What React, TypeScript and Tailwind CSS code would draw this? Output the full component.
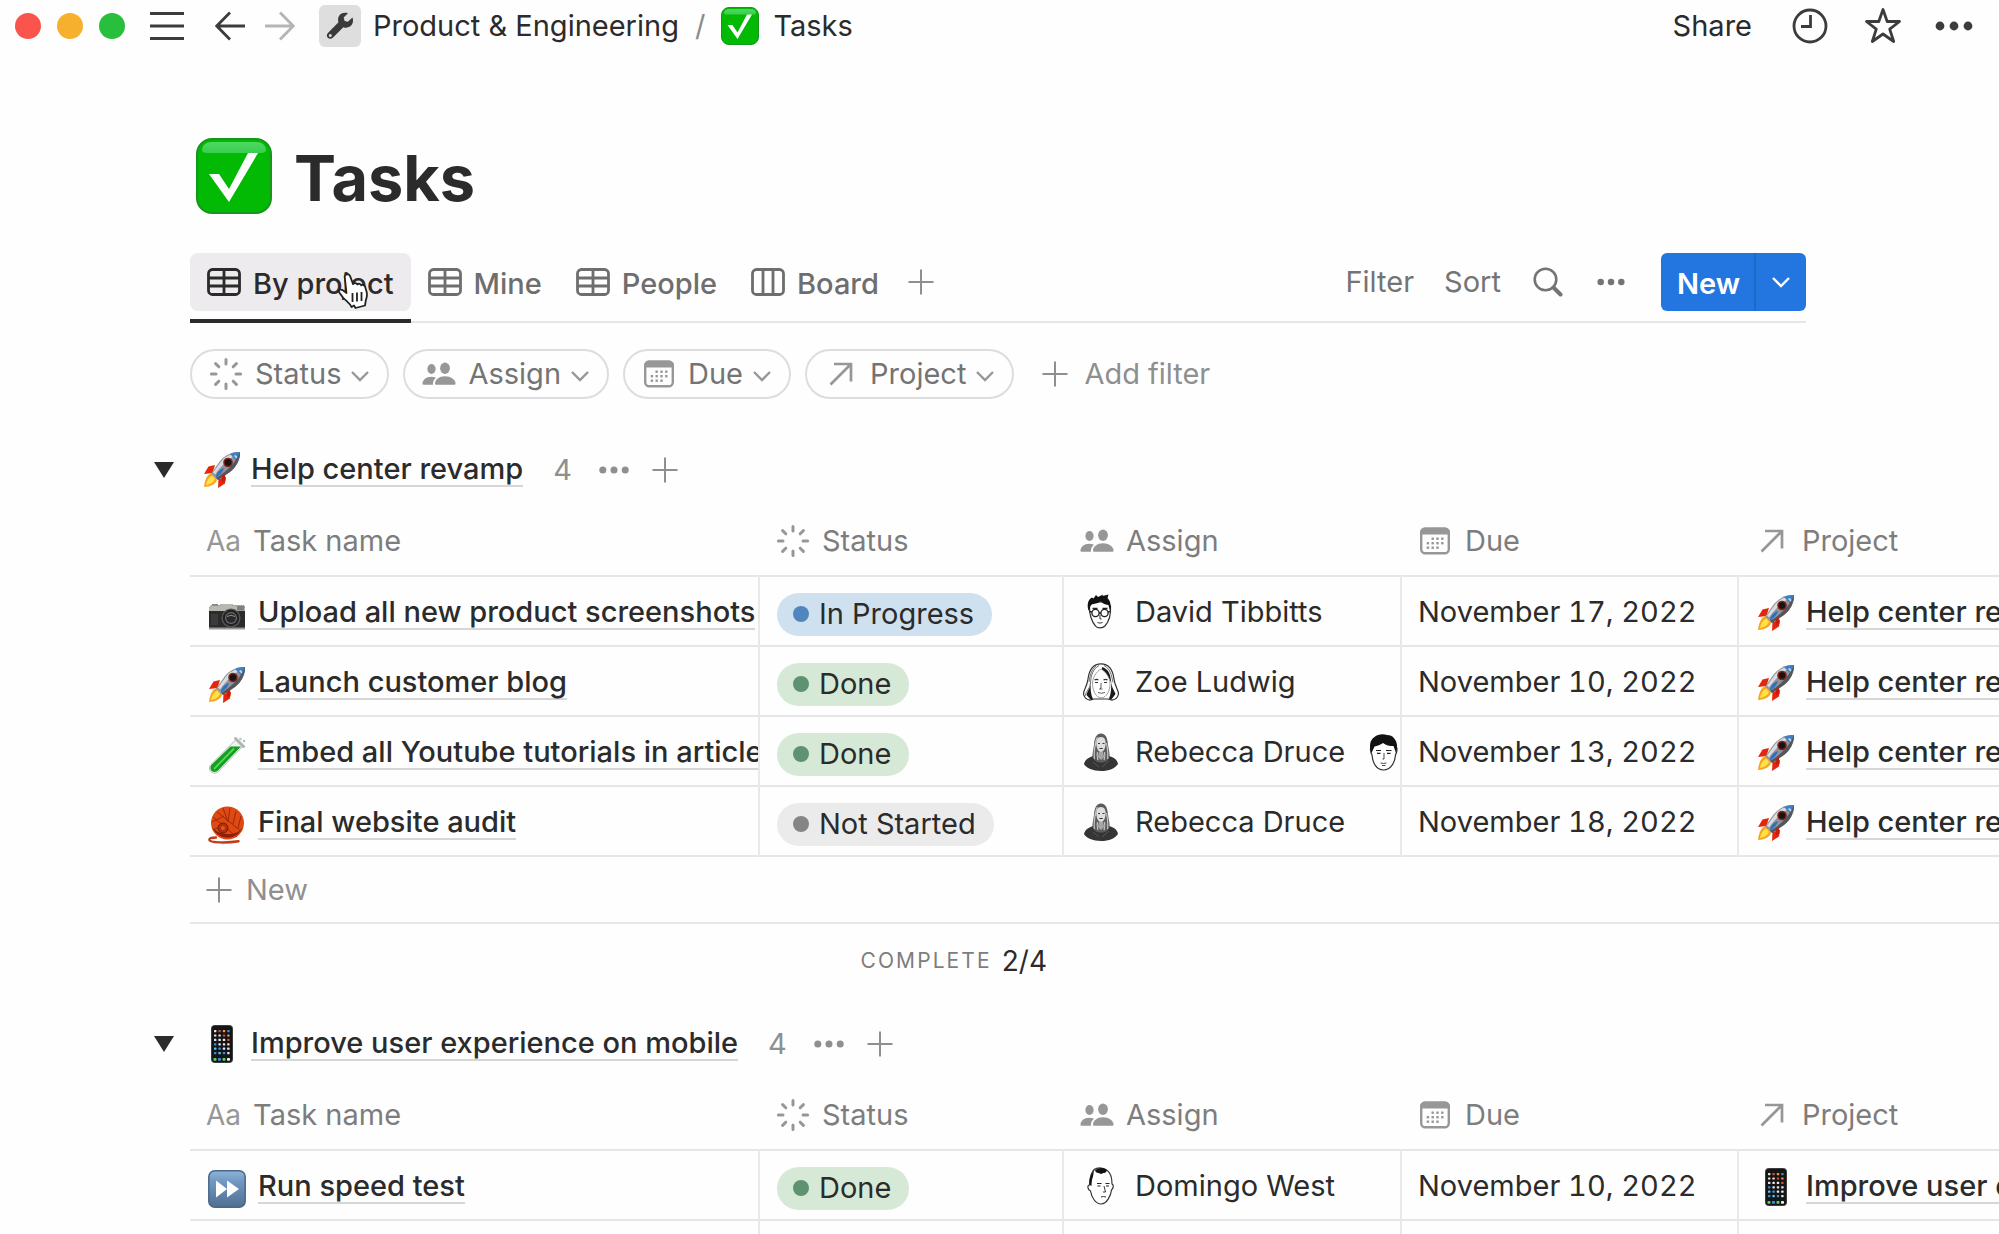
import React from "react";
import clsx from "clsx";

type IconProps = { className?: string };

/* ---------- line icons ---------- */

const PlusIcon = ({ className }: IconProps) => (
  <svg viewBox="0 0 26 26" className={clsx("shrink-0", className)} fill="none" stroke="currentColor" strokeWidth="2">
    <path d="M13 0.5v25M0.5 13h25" />
  </svg>
);

const DotsIcon = ({ className }: IconProps) => (
  <svg viewBox="0 0 38 10" className={clsx("shrink-0", className)} fill="currentColor">
    <circle cx="5" cy="5" r="4.4" />
    <circle cx="19" cy="5" r="4.4" />
    <circle cx="33" cy="5" r="4.4" />
  </svg>
);

const ChevronIcon = ({ className }: IconProps) => (
  <svg viewBox="0 0 18 11" className={clsx("shrink-0", className)} fill="none" stroke="currentColor" strokeWidth="2.4">
    <path d="M1 1l8 8 8-8" />
  </svg>
);

const TableIcon = ({ className }: IconProps) => (
  <svg viewBox="0 0 34 28" className={clsx("h-7 w-[34px] shrink-0", className)} fill="none" stroke="currentColor" strokeWidth="2.8">
    <rect x="1.5" y="1.5" width="31" height="25" rx="4" />
    <path d="M17 2v24M2 10h30M2 18h30" />
  </svg>
);

const BoardIcon = ({ className }: IconProps) => (
  <svg viewBox="0 0 34 28" className={clsx("h-7 w-[34px] shrink-0", className)} fill="none" stroke="currentColor" strokeWidth="2.8">
    <rect x="1.5" y="1.5" width="31" height="25" rx="4" />
    <path d="M12 2v24M22 2v24" />
  </svg>
);

const StatusIcon = ({ className }: IconProps) => (
  <svg viewBox="0 0 34 34" className={clsx("size-[34px] shrink-0", className)} fill="none" stroke="currentColor" strokeWidth="3" strokeLinecap="round">
    <path d="M17 2.400v4.600M17 27v4.600M2.400 17h4.600M27 17h4.600M6.600 6.600l3.200 3.200M24.200 24.200l3.200 3.200M6.600 27.400l3.200-3.200M24.200 9.800l3.200-3.200" />
  </svg>
);

const PeopleIcon = ({ className }: IconProps) => (
  <svg viewBox="0 0 34 24" className={clsx("h-6 w-[34px] shrink-0", className)} fill="currentColor">
    <ellipse cx="23" cy="6.200" rx="4.900" ry="5.700" />
    <ellipse cx="9.500" cy="7" rx="4.100" ry="4.900" />
    <path d="M13 21.500c0-4 4.300-7.300 10-7.300s10.500 3.300 10.500 7.300c0 .9-.5 1.300-1.300 1.300H14.300c-.8 0-1.300-.4-1.300-1.300z" />
    <path d="M11 22.800H1.600c-.7 0-1.100-.4-1.100-1.200 0-3.600 3.600-6.900 8.800-6.900 1.800 0 3.400.4 4.700 1-2.300 1.700-3.500 4.500-3 7.100z" />
  </svg>
);

const CalendarIcon = ({ className }: IconProps) => (
  <svg viewBox="0 0 32 28" className={clsx("h-7 w-8 shrink-0", className)}>
    <rect x="2.200" y="1.700" width="27.600" height="24.600" rx="4" fill="none" stroke="currentColor" strokeWidth="2.400" />
    <path d="M1 7.600V5.500a5 5 0 0 1 5-5h20a5 5 0 0 1 5 5v2.100z" fill="currentColor" />
    <g fill="currentColor">
      <rect x="12.500" y="10.500" width="2.400" height="2.400" />
      <rect x="17.300" y="10.500" width="2.400" height="2.400" />
      <rect x="22.100" y="10.500" width="2.400" height="2.400" />
      <rect x="7.700" y="15" width="2.400" height="2.400" />
      <rect x="12.500" y="15" width="2.400" height="2.400" />
      <rect x="17.300" y="15" width="2.400" height="2.400" />
      <rect x="22.100" y="15" width="2.400" height="2.400" />
      <rect x="7.700" y="19.500" width="2.400" height="2.400" />
      <rect x="12.500" y="19.500" width="2.400" height="2.400" />
      <rect x="17.300" y="19.500" width="2.400" height="2.400" />
    </g>
  </svg>
);

const RelationIcon = ({ className }: IconProps) => (
  <svg viewBox="0 0 24 24" className={clsx("size-6 shrink-0", className)} fill="none" stroke="currentColor" strokeWidth="2.700">
    <path d="M1.500 22.500L21.500 2.500M5 2h17v17.500" />
  </svg>
);

/* ---------- emoji ---------- */

const CheckEmoji = ({ className }: IconProps) => (
  <svg viewBox="0 0 76 76" className={clsx("shrink-0", className)}>
    <defs>
      <linearGradient id="gloss" x1="0" y1="0" x2="0" y2="1">
        <stop offset="0" stopColor="#4fd864" />
        <stop offset="1" stopColor="#3ace4c" />
      </linearGradient>
    </defs>
    <rect x="1" y="1" width="74" height="74" rx="15" fill="#02b903" stroke="#17961e" strokeWidth="2" />
    <path d="M6 13C6 7 10 4 16 4h44c6 0 10 3 10 9-2 2-4 2-6 2H12c-2 0-4 0-6-2z" fill="url(#gloss)" />
    <path d="M13 36h10l10 15 19-36h10L33 64z" fill="#fff" />
  </svg>
);

const RocketEmoji = ({ className }: IconProps) => (
  <svg viewBox="0 0 38 38" className={clsx("size-[38px] shrink-0", className)}>
    <path d="M12 14L5.500 15.500 1 23l8.500-1z" fill="#e5260c" />
    <path d="M23 26l-1 6.500-7 4.500.5-9z" fill="#e5260c" />
    <path d="M9 22c-4 1-7 5-8 14 6 0 12-3 13-7z" fill="#f7a51c" />
    <path d="M9.500 24.500C6 26 3.500 30 3 34c4-.5 8-3 9-6z" fill="#ffe04a" />
    <path d="M37 1c-8-.5-15 3-20 9L8 22.500l7 6.500 12-8c6.500-5 10-12 10-20z" fill="#8f949b" />
    <path d="M36 2c-7 0-13.500 3-18 8.500L10 21.500l2 2C18 15 26 7 36 2z" fill="#d8dce1" />
    <path d="M37 1c-3.500 0-7 .6-10 2l7.500 8C36.500 8 37 4.500 37 1z" fill="#3f7fc4" />
    <path d="M36.500 10.500L31 5l1.500-1 4 4z" fill="#c9d8e8" />
    <path d="M37 1c0 8-3.500 15-10 20l-12 8-2-2c10-6 19-14 24-26z" fill="#53565c" />
    <circle cx="25" cy="11.500" r="4.800" fill="#8d2017" />
    <circle cx="25" cy="11.500" r="3.300" fill="#151515" />
    <path d="M21 17c-4 1-7.500 4.500-8.500 10 3.500-2.500 7-5 8.500-10z" fill="#2f6fc0" />
    <path d="M22 23l-3.500 2.500.5 6 3.500-2z" fill="#c51c0b" />
  </svg>
);

const CameraEmoji = ({ className }: IconProps) => (
  <svg viewBox="0 0 38 38" className={clsx("size-[38px] shrink-0", className)}>
    <path d="M1 12l2-2.500h9l1-1.500h11l1 1.500h11L37 12v21H1z" fill="#2b2b2b" />
    <path d="M1 15v-3l2-2.500h9l1-1.500h11l1 1.500h10.500L37 12v3z" fill="#b9b7b2" />
    <rect x="29" y="10" width="7" height="4.500" fill="#80817f" />
    <rect x="4" y="8" width="6" height="2" fill="#8d8b87" />
    <rect x="1" y="31.500" width="36" height="2" fill="#9b9a97" />
    <circle cx="23" cy="22" r="9.600" fill="#55565a" />
    <circle cx="23" cy="22" r="8.200" fill="#222" />
    <circle cx="23" cy="22" r="6" fill="#6b6d70" />
    <circle cx="23" cy="22" r="4.800" fill="#29292b" />
    <path d="M19 20.500q4-2.500 8 0" stroke="#8d8f92" fill="none" />
    <rect x="3" y="18" width="7" height="11" fill="#3b3b3b" />
  </svg>
);

const TestTubeEmoji = ({ className }: IconProps) => (
  <svg viewBox="0 0 38 38" className={clsx("size-[38px] shrink-0", className)}>
    <path d="M28 3.500L35 10 10.500 35.500c-2.400 2.200-5.600 2.200-7.600.2s-2-5 .2-7.300z" fill="#eef3f1" stroke="#b5bbb8" />
    <path d="M22.500 10.500h10.500L10 34.500c-2 1.900-4.800 1.900-6.500.2s-1.400-4.300.4-6.200z" fill="#11a01e" />
    <path d="M26 12.500L6 33" stroke="#58d35c" strokeWidth="1.800" />
    <path d="M27.500 2.500l8 8" stroke="#b0b5b3" strokeWidth="3" strokeLinecap="round" />
    <circle cx="32.500" cy="3" r="1.500" fill="#c8ccca" />
    <circle cx="36" cy="5" r="1.200" fill="#b5bab8" />
  </svg>
);

const YarnEmoji = ({ className }: IconProps) => (
  <svg viewBox="0 0 38 38" className={clsx("size-[38px] shrink-0", className)}>
    <path d="M8 31.500c-5 0-7 .6-6.500 2.600.8 2.500 16 3.200 29 1.200" fill="none" stroke="#c23a1c" strokeWidth="2.400" strokeLinecap="round" />
    <circle cx="19.500" cy="17" r="16.500" fill="#de4a12" />
    <path d="M4 21a16.500 16.500 0 0 0 31 0c-4 6-9 7-15 7S8 26 4 21z" fill="#8e1f0a" />
    <g fill="none" stroke="#9c2a0d" strokeWidth="1">
      <path d="M5 11l24 20M9 6l24 19M15 2l5 14M22 2l-2 14M28 5l-3 13M33 10l-3 12M4 16l12-6M5 24l12-6" />
    </g>
    <circle cx="15" cy="22" r="5" fill="#b0300d" stroke="#7d1b08" />
    <circle cx="15" cy="22" r="2" fill="#df5a28" />
  </svg>
);

const PHONE_APPS = ["#e8e8e8", "#3f8fe0", "#e8e8e8", "#d94a3c", "#5ac8fa", "#e8e8e8", "#f0a030", "#3f8fe0"];

const PhoneEmoji = ({ className }: IconProps) => (
  <svg viewBox="0 0 38 38" className={clsx("size-[38px] shrink-0", className)}>
    <rect x="8.500" y="0.500" width="21" height="37" rx="3" fill="#151515" stroke="#3c3c3c" />
    {Array.from({ length: 24 }, (_, i) => (
      <rect
        key={i}
        x={11 + (i % 4) * 4.4}
        y={5 + Math.floor(i / 4) * 4.4}
        width="2.400"
        height="2.200"
        rx="0.600"
        fill={PHONE_APPS[(i * 3 + Math.floor(i / 4)) % PHONE_APPS.length]}
      />
    ))}
    <rect x="10.500" y="33" width="3" height="2.800" rx="0.700" fill="#4cd964" />
    <rect x="15" y="33" width="3" height="2.800" rx="0.700" fill="#3f8fe0" />
    <rect x="19.500" y="33" width="3" height="2.800" rx="0.700" fill="#4cd964" />
    <rect x="24" y="33" width="3" height="2.800" rx="0.700" fill="#f2f2f2" />
  </svg>
);

const FastForwardEmoji = ({ className }: IconProps) => (
  <svg viewBox="0 0 38 38" className={clsx("size-[38px] shrink-0", className)}>
    <defs>
      <linearGradient id="ff" x1="0" y1="0" x2="0" y2="1">
        <stop offset="0" stopColor="#8fb4d8" />
        <stop offset="0.300" stopColor="#6f98c2" />
        <stop offset="1" stopColor="#4f6f90" />
      </linearGradient>
    </defs>
    <rect x="0.800" y="0.800" width="36.400" height="36.400" rx="6" fill="url(#ff)" stroke="#48688a" strokeWidth="1.500" />
    <path d="M8 10.500v17L19 19zM19 10.500v17L31 19z" fill="#fff" />
  </svg>
);

/* ---------- avatars ---------- */

const DavidAvatar = () => (
  <svg viewBox="0 0 38 38" className="size-[38px] shrink-0">
    <path d="M7.500 13c-.6 8 2.500 16 6 20 2 2.600 7 2.600 9.500 0 3.500-4 6-12 5.500-20L24 9H11z" fill="#fff" stroke="#333" strokeWidth="1.200" />
    <path d="M6.500 18C5 12 5.500 7 10 4.500l1.500 1L14 2l2 2 5-2.500-.5 1.500 6-1.500-1 3.500c3 3 4 8 2.500 13L26.500 12c-4-.5-6-2-8-3.500-3 2-6 2.500-9.500 3z" fill="#111" />
    <g fill="none" stroke="#222" strokeWidth="1.300">
      <circle cx="13.500" cy="20" r="3.600" />
      <circle cx="22.500" cy="20" r="3.600" />
      <path d="M17 20h2M7.500 18.500l2.500.5M26 19l2-.5M10.500 15.500h5M20.500 15.500h5" />
      <path d="M18 22v4h1.500M15.500 29.500q2.500 1.200 5 0" strokeWidth="0.900" />
    </g>
  </svg>
);

const ZoeAvatar = () => (
  <svg viewBox="0 0 38 38" className="size-[38px] shrink-0">
    <path d="M19 0.800C10 .8 7 8 6 16 5 24 1.500 27 1.500 31c.5 3 3 5.500 6.500 6.200l4-1.200h14l4 1.200c3.500-.7 6-3.200 6.500-6.200 0-4-3.500-7-4.500-15C31 8 28 .8 19 .8z" fill="#fff" stroke="#333" strokeWidth="1.200" />
    <path d="M29 19c1 6 3 8 4.500 12L29 37l-2-1.500c2-4.500 2.500-10 2-16.500z" fill="#1a1a1a" />
    <path d="M9 20c-.5 5-3.500 7.500-4.500 12L9 37l2-1c-2-4-3-10-2-16z" fill="#1a1a1a" />
    <path d="M20 4c6 2 8.500 6 9.300 16-2.300-5-4.300-10-9.300-13z" fill="#1a1a1a" />
    <path d="M19 6c-5 3-8 8-8.500 14 0 6 2 11 5 13.500 2 1.800 5.500 1.800 7.500 0 3-2.500 5.500-8.500 5-13.500C27.500 14 24 9 19 6z" fill="#fff" stroke="#777" strokeWidth="0.700" />
    <g fill="none" stroke="#333" strokeWidth="1.100">
      <path d="M17 2.500C11 6 9 12 8.500 20 8 26 4 28 3 33M14 3C9 7 8 13 7 19M22 2.500c6 3 7.500 9 9 17" strokeWidth="0.700" />
      <path d="M12.500 17q2-1.300 4 0M21.500 17q2-1.300 4 0M13 19.500h3M22 19.500h3" />
      <path d="M19 20v5l-1.500 1h3M16 29.500q3.500 1.500 7 0" strokeWidth="0.800" />
    </g>
  </svg>
);

const RebeccaAvatar = () => (
  <svg viewBox="0 0 38 38" className="size-[38px] shrink-0">
    <path d="M2 31c1-5 6-7 9-8h16c4 1 8 3 9 8-3 4.500-9 7-17 7S4 35 2 31z" fill="#353535" />
    <path d="M19 0.500c-5 0-6.500 5-7 11-.4 5-2 9-1.500 13 2 4 5 5 8.500 5s7-1 8.500-5c.5-5-1-8-1.500-13-.5-6-2-11-7-11z" fill="#5c5c5c" />
    <path d="M13.500 10c-1 6-2 11-1 16M24.500 10c1 6 2 11 1 16M15.500 4c-2 3-2 6-2 9M15.500 19c-1 4 0 6 .5 8M22.500 19c1 4 0 6-.5 8" stroke="#c4c4c4" strokeWidth="1.200" fill="none" />
    <path d="M19 4c-3.500 0-5 3-4.600 7.500.2 4 2.200 7.500 4.600 7.500s4.400-3.500 4.600-7.500C24 7 22.500 4 19 4z" fill="#dedede" />
    <path d="M16 10.500h2M20.500 10.500h2M17.500 15.500h3.200" stroke="#333" strokeWidth="1.100" />
    <path d="M17 19h4l1.200 5-3.200 3-3.200-3z" fill="#a5a5a5" />
    <path d="M11 29l6 5M27 28l-7 6" stroke="#565656" />
  </svg>
);

const DarkHairAvatar = () => (
  <svg viewBox="0 0 38 38" className="size-[38px] shrink-0">
    <path d="M7 14c-2.500 0-1.500 5 0 8 .5 7 4 15 11.500 15S30 29 30.500 22c1.500-3 2.500-8 0-8L27 8H10z" fill="#fff" stroke="#333" strokeWidth="1.200" />
    <path d="M6.500 20C4 14 4.500 7 9.500 4c3-3 9-3.500 12.500-2 6 0 9.500 5 10 10 .3 3-.5 6-1 8L28.500 13c-4 0-7.500-.5-10.500-3-2.500 2-6 3-8.500 3.500z" fill="#111" />
    <g fill="none" stroke="#222" strokeWidth="1.200">
      <path d="M11 17.500h5M21 17.500h5.500M12 20.300h3.500M22 20.300h3.500" />
      <path d="M19 20v6h-1.500M15.500 30q3 1 6 0M17 32.500h3.500" strokeWidth="0.800" />
    </g>
  </svg>
);

const DomingoAvatar = () => (
  <svg viewBox="0 0 38 38" className="size-[38px] shrink-0">
    <path d="M9 8c-1 3-1.500 7-1.500 10C5 18 5.500 23 8.500 24c1 6 5 13 10.500 13 6 0 10-9 10.500-14 2-2 2.500-5 .5-6 0-8-2-15-11-16C14 .5 10.500 3 9 8z" fill="#fff" stroke="#333" strokeWidth="1.200" />
    <path d="M12 3.500C9 7 7 12 8 18l1.500 1c0-4 .5-7 1.500-9.500z" fill="#111" />
    <path d="M13 3.500c3-3.500 10-3.500 12 0-1 2-2 2.500-3.500 2.500l-2.500 1-2.500-1c-2 0-3-1-3.500-2.500z" fill="#111" />
    <g fill="none" stroke="#222" strokeWidth="1.200">
      <path d="M15 16.500h4.500M23.500 16.500h4M15.500 19h3M24 19h3" />
      <path d="M22 19l1.500 6H21M19 30q2.500-1 5 0" strokeWidth="0.900" />
    </g>
  </svg>
);

const HandCursor = ({ className }: IconProps) => (
  <svg viewBox="0 0 32 40" className={className}>
    <path
      d="M9.500 3.500c1.500-.6 3 .2 3.600 1.700l3 8c.8-1.500 3.500-1.500 4.200.3 1-1.200 3.300-1 4 .8 1.300-.9 3.300-.1 3.900 1.600l1.600 5.600c.7 3-.3 5.500-1 8l-.8 5-9.500 2.500-1.500-2.500-2.500 1.500c-1.500-4-5.500-6-8.500-9.500-1.500-2-4-4.500-4.300-6.500.5-1.800 3-1.500 4.500-.5l3.300 2.500L7.800 6.700c-.5-1.500.3-2.700 1.700-3.200z"
      fill="#fff"
      stroke="#222"
      strokeWidth="1.800"
      strokeLinejoin="round"
    />
    <path d="M15.500 22v9M20 21.500v9M24.500 21v9" stroke="#222" strokeWidth="1.800" />
  </svg>
);

/* ---------- data ---------- */

const statusStyles = {
  "In Progress": { pill: "bg-[#cfe1ef]", dot: "bg-[#4f86bd]" },
  Done: { pill: "bg-[#d6e9d6]", dot: "bg-[#5f9271]" },
  "Not Started": { pill: "bg-[#ecebec]", dot: "bg-[#858585]" },
};

type Person = { name: string; Avatar: React.ComponentType };

type Task = {
  Emoji: React.ComponentType<IconProps>;
  name: string;
  status: keyof typeof statusStyles;
  assign: Person[];
  due: string;
};

type Group = {
  title: string;
  Emoji: React.ComponentType<IconProps>;
  count: number;
  complete?: string;
  tasks: Task[];
};

const david = { name: "David Tibbitts", Avatar: DavidAvatar };
const zoe = { name: "Zoe Ludwig", Avatar: ZoeAvatar };
const rebecca = { name: "Rebecca Druce", Avatar: RebeccaAvatar };
const domingo = { name: "Domingo West", Avatar: DomingoAvatar };

const groups: Group[] = [
  {
    title: "Help center revamp",
    Emoji: RocketEmoji,
    count: 4,
    complete: "2/4",
    tasks: [
      { Emoji: CameraEmoji, name: "Upload all new product screenshots", status: "In Progress", assign: [david], due: "November 17, 2022" },
      { Emoji: RocketEmoji, name: "Launch customer blog", status: "Done", assign: [zoe], due: "November 10, 2022" },
      { Emoji: TestTubeEmoji, name: "Embed all Youtube tutorials in articles", status: "Done", assign: [rebecca, { name: "", Avatar: DarkHairAvatar }], due: "November 13, 2022" },
      { Emoji: YarnEmoji, name: "Final website audit", status: "Not Started", assign: [rebecca], due: "November 18, 2022" },
    ],
  },
  {
    title: "Improve user experience on mobile",
    Emoji: PhoneEmoji,
    count: 4,
    tasks: [
      { Emoji: FastForwardEmoji, name: "Run speed test", status: "Done", assign: [domingo], due: "November 10, 2022" },
    ],
  },
];

const views = [
  { label: "By project", Icon: TableIcon, active: true },
  { label: "Mine", Icon: TableIcon },
  { label: "People", Icon: TableIcon },
  { label: "Board", Icon: BoardIcon },
];

const filters = [
  { label: "Status", Icon: StatusIcon },
  { label: "Assign", Icon: PeopleIcon },
  { label: "Due", Icon: CalendarIcon },
  { label: "Project", Icon: RelationIcon },
];

/* ---------- sections ---------- */

const TopBar = () => (
  <header className="flex h-[52px] items-center justify-between pr-[26px] pl-[15px] text-[29px] leading-9">
    <div className="flex items-center">
      <div className="flex gap-4">
        <span className="size-[26px] rounded-full bg-[#f9554d]" />
        <span className="size-[26px] rounded-full bg-[#f7b02e]" />
        <span className="size-[26px] rounded-full bg-[#27bf3c]" />
      </div>
      <button aria-label="Menu" className="ml-6">
        <svg viewBox="0 0 36 30" className="h-[30px] w-9" stroke="#3c3c3c" strokeWidth="3">
          <path d="M1 2.500h34M1 15h34M1 27.500h34" />
        </svg>
      </button>
      <button aria-label="Back" className="ml-[30px]">
        <svg viewBox="0 0 30 30" className="size-[30px]" fill="none" stroke="#3c3c3c" strokeWidth="2.800">
          <path d="M30 15H2M15 1.500L1.800 15 15 28.500" />
        </svg>
      </button>
      <button aria-label="Forward" className="ml-5">
        <svg viewBox="0 0 30 30" className="size-[30px]" fill="none" stroke="#b5b5b5" strokeWidth="2.800">
          <path d="M0 15h28M15 1.500L28.200 15 15 28.500" />
        </svg>
      </button>
      <nav className="ml-6 flex items-center">
        <span className="flex size-[42px] items-center justify-center rounded-md bg-[#dedede]">
          <svg viewBox="0 0 28 28" className="size-7">
            <path
              fill="#3a3a3a"
              d="M26.500 5.500l-4.700 4.200-3.200-.8-.9-3.300L22 1.300C18.500.2 14.800 1 13 4c-1.200 2-1.200 4.300-.5 6.300L1.900 20.900c-1.400 1.500-1.400 3.600-.1 4.900 1.400 1.400 3.600 1.300 5-.1l10.500-10.500c2.100.8 4.600.8 6.700-.6 2.900-1.900 3.700-5.700 2.500-9.100zM4.300 25.100a1.500 1.500 0 1 1 0-3 1.500 1.500 0 0 1 0 3z"
            />
          </svg>
        </span>
        <a href="#product" className="ml-3">Product &amp; Engineering</a>
        <span className="mx-4 text-[#8b8b8b]">/</span>
        <CheckEmoji className="size-[38px]" />
        <a href="#tasks" className="ml-[14px]">Tasks</a>
      </nav>
    </div>
    <div className="flex items-center text-[#3c3c3c]">
      <button className="text-[#2b2b2b]">Share</button>
      <button aria-label="Updates" className="ml-10">
        <svg viewBox="0 0 36 36" className="size-9" fill="none" stroke="currentColor" strokeWidth="2.800">
          <circle cx="18" cy="18" r="16" />
          <path d="M18.500 7v11.500H9" />
        </svg>
      </button>
      <button aria-label="Favorite" className="ml-9">
        <svg viewBox="0 0 38 38" className="size-[38px]" fill="none" stroke="currentColor" strokeWidth="2.800" strokeLinejoin="round">
          <path d="M19 2.500l4.200 12H35.500l-9.800 7.600 4 12.400L19 27l-10.700 7.500 4-12.400-9.800-7.600h12.300z" />
        </svg>
      </button>
      <button aria-label="More" className="ml-[33px]">
        <DotsIcon className="h-[10px] w-[38px]" />
      </button>
    </div>
  </header>
);

const ViewTabs = () => (
  <div className="mr-[193px] ml-[190px] flex justify-between border-b-2 border-[#e6e6e6] text-[29px] leading-9">
    <div className="-mb-[2px] flex">
      {views.map(({ label, Icon, active }) => (
        <div key={label} className={clsx("relative pb-2", active && "border-b-4 border-[#2b2b2b]")}>
          <button
            className={clsx(
              "flex h-[58px] items-center gap-3 rounded-lg px-[17px] font-medium",
              active ? "bg-[#edebed] text-[#2b2b2b]" : "text-[#6e6e6e]"
            )}
          >
            <Icon />
            <span className="pt-1">{label}</span>
          </button>
          {active && <HandCursor className="absolute top-[18px] right-[42px] h-10 w-8" />}
        </div>
      ))}
      <button aria-label="Add view" className="ml-3 flex h-[58px] items-center text-[#8f8f8f]">
        <PlusIcon className="size-[26px]" />
      </button>
    </div>
    <div className="flex h-[58px] items-center text-[#747474]">
      <button>Filter</button>
      <button className="ml-[30px]">Sort</button>
      <button aria-label="Search" className="ml-8">
        <svg viewBox="0 0 30 30" className="size-[30px]" fill="none" stroke="currentColor">
          <circle cx="12.500" cy="12.500" r="10.800" strokeWidth="2.600" />
          <path d="M20.500 20.500l7 7" strokeWidth="4" strokeLinecap="round" />
        </svg>
      </button>
      <button aria-label="View options" className="ml-[34px]">
        <DotsIcon className="h-2 w-7" />
      </button>
      <div className="ml-9 flex h-[58px] rounded-md bg-[#2376e0] font-semibold text-white">
        <button className="border-r-2 border-[#1d69c9] pt-1 pr-[14px] pl-4">New</button>
        <button aria-label="New from template" className="flex w-[50px] items-center justify-center">
          <ChevronIcon className="h-[11px] w-[18px]" />
        </button>
      </div>
    </div>
  </div>
);

const FilterBar = () => (
  <div className="mt-[26px] ml-[190px] flex items-center gap-[14px] text-[29px] leading-9">
    {filters.map(({ label, Icon }) => (
      <button
        key={label}
        className="flex h-[50px] items-center rounded-full border-2 border-[#dddddd] pr-[18px] pl-[17px] text-[#747474]"
      >
        <span className="mr-3 flex w-[34px] justify-center text-[#979797]">
          <Icon />
        </span>
        {label}
        <ChevronIcon className="mt-1 ml-[10px] h-[11px] w-[18px] text-[#979797]" />
      </button>
    ))}
    <button className="ml-[14px] flex items-center gap-4 text-[#8f8f8f]">
      <PlusIcon className="size-[26px]" />
      Add filter
    </button>
  </div>
);

const PageLink = ({ children }: { children: React.ReactNode }) => (
  <a href="#page" className="border-b-2 border-[#d6d6d6] leading-8 font-medium whitespace-nowrap">
    {children}
  </a>
);

const HeadCell = ({ icon, children, className }: { icon: React.ReactNode; children: React.ReactNode; className?: string }) => (
  <th className={clsx("text-left font-normal text-[#7d7d7d]", className)}>
    <span className="flex items-center gap-3">
      <span className="flex text-[#979797]">{icon}</span>
      {children}
    </span>
  </th>
);

const TaskGroup = ({ group }: { group: Group }) => (
  <section className="text-[29px] leading-9">
    <div className="flex h-10 items-center pl-[154px]">
      <button aria-label="Toggle group">
        <svg viewBox="0 0 20 16" className="h-4 w-5" fill="#2b2b2b">
          <path d="M0 0h20L10 16z" />
        </svg>
      </button>
      <group.Emoji className="mr-[10px] ml-[29px]" />
      <PageLink>{group.title}</PageLink>
      <span className="ml-[30px] text-[#8f8f8f]">{group.count}</span>
      <button aria-label="Group options" className="ml-[26px] text-[#8f8f8f]">
        <DotsIcon className="h-2 w-8" />
      </button>
      <button aria-label="Add task to group" className="ml-[22px] text-[#8f8f8f]">
        <PlusIcon className="size-[26px]" />
      </button>
    </div>

    <div className="mt-4 pl-[190px]">
      <table className="w-full table-fixed border-collapse">
        <thead>
          <tr className="h-[70px] border-b-2 border-[#e6e6e6]">
            <HeadCell className="w-[569px] pl-4" icon={<span className="text-[28px]">Aa</span>}>Task name</HeadCell>
            <HeadCell className="w-[304px] pl-[17px]" icon={<StatusIcon />}>Status</HeadCell>
            <HeadCell className="w-[338px] pl-[17px]" icon={<PeopleIcon />}>Assign</HeadCell>
            <HeadCell className="w-[337px] pl-4" icon={<CalendarIcon className="mx-[2px]" />}>Due</HeadCell>
            <HeadCell className="pl-4" icon={<RelationIcon className="mx-[6px]" />}>Project</HeadCell>
          </tr>
        </thead>
        <tbody>
          {group.tasks.map((task) => (
            <tr key={task.name} className="h-[70px] border-b-2 border-[#e6e6e6]">
              <td className="overflow-hidden border-r-2 border-[#e9e9e9] pt-1 pl-[18px]">
                <div className="flex items-center gap-3">
                  <task.Emoji className="mt-1" />
                  <PageLink>{task.name}</PageLink>
                </div>
              </td>
              <td className="border-r-2 border-[#e9e9e9] pt-[6px] pl-[17px]">
                <span className={clsx("inline-flex h-[43px] items-center rounded-full pr-[18px] pl-4 align-middle", statusStyles[task.status].pill)}>
                  <span className={clsx("mr-[10px] size-4 rounded-full", statusStyles[task.status].dot)} />
                  {task.status}
                </span>
              </td>
              <td className="overflow-hidden border-r-2 border-[#e9e9e9] pt-[2px] pl-[18px]">
                <div className="flex items-center gap-5">
                  {task.assign.map(({ name, Avatar }, i) => (
                    <span key={i} className="flex items-center gap-[15px] whitespace-nowrap">
                      <Avatar />
                      {name}
                    </span>
                  ))}
                </div>
              </td>
              <td className="border-r-2 border-[#e9e9e9] pt-[2px] pl-4 whitespace-nowrap tabular-nums">{task.due}</td>
              <td className="overflow-hidden pt-1 pl-[18px]">
                <div className="flex items-center gap-[11px]">
                  <group.Emoji />
                  <PageLink>{group.title}</PageLink>
                </div>
              </td>
            </tr>
          ))}
          {!group.complete && (
            <tr className="h-[70px]">
              <td className="border-r-2 border-[#e9e9e9]" />
              <td className="border-r-2 border-[#e9e9e9]" />
              <td className="border-r-2 border-[#e9e9e9]" />
              <td className="border-r-2 border-[#e9e9e9]" />
              <td />
            </tr>
          )}
        </tbody>
      </table>

      {group.complete && (
        <>
          <button className="flex h-[67px] w-full items-center gap-[14px] border-b-2 border-[#e6e6e6] pl-4 text-[#8f8f8f]">
            <PlusIcon className="size-[26px]" />
            New
          </button>
          <div className="flex h-[73px] w-[857px] items-center justify-end gap-[10px]">
            <span className="text-[21px] tracking-widest text-[#7d7d7d]">COMPLETE</span>
            <span className="text-[28px]">{group.complete}</span>
          </div>
        </>
      )}
    </div>
  </section>
);

export default function App() {
  return (
    <div className="h-screen overflow-hidden bg-[#fefefe] font-[Inter,sans-serif] text-[#2b2b2b]">
      <TopBar />
      <main>
        <div className="mt-[86px] ml-[196px] flex items-center gap-[22px]">
          <CheckEmoji className="size-[76px]" />
          <h1 className="pt-1 text-[63px] leading-[72px] font-bold">Tasks</h1>
        </div>
        <div className="mt-[39px]">
          <ViewTabs />
        </div>
        <FilterBar />
        <div className="mt-[51px] flex flex-col gap-[27px]">
          {groups.map((group) => (
            <TaskGroup key={group.title} group={group} />
          ))}
        </div>
      </main>
    </div>
  );
}
